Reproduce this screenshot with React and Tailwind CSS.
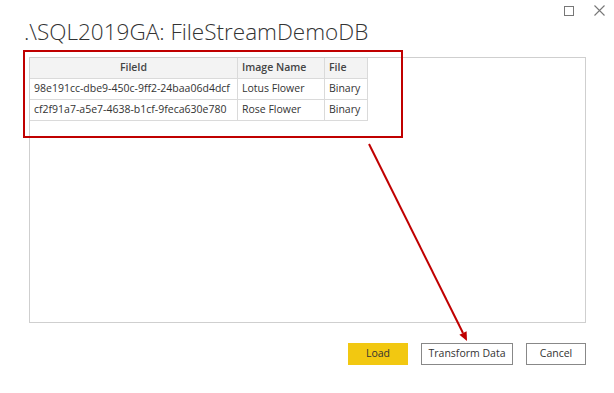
import React from 'react';

const rows = [
  { id: '98e191cc-dbe9-450c-9ff2-24baa06d4dcf', name: 'Lotus Flower', file: 'Binary' },
  { id: 'cf2f91a7-a5e7-4638-b1cf-9feca630e780', name: 'Rose Flower', file: 'Binary' },
];

const App = () => {
  return (
    <div className="relative w-[614px] h-[393px] bg-white overflow-hidden text-[#333] font-['Open_Sans',sans-serif]">
      {/* window controls */}
      <div className="absolute top-[5px] right-[9px] flex items-center gap-[20px]">
        <div className="w-[10px] h-[10px] border border-[#777]"></div>
        <svg className="w-[11px] h-[11px]" viewBox="0 0 11 11">
          <path d="M0.5 0.5L10.5 10.5M10.5 0.5L0.5 10.5" stroke="#777" strokeWidth="1.1" />
        </svg>
      </div>

      {/* Title */}
      <div className="h-[57px] pl-[24px] pt-[18px]">
        <h1 className="text-[22.5px] leading-[28px] font-light text-[#333]">.\SQL2019GA: FileStreamDemoDB</h1>
      </div>

      {/* Preview panel */}
      <div className="ml-[29px] w-[557px] h-[266px] border border-[#cfcfcf]">
        <div className="flex text-[10.5px] font-semibold text-[#444] bg-white">
          <div className="w-[208px] h-[21px] border-r border-b border-[#dadada] bg-[#f3f3f3] flex items-center justify-center">FileId</div>
          <div className="w-[87px] h-[21px] border-r border-b border-[#dadada] bg-[#f3f3f3] flex items-center pl-[4px]">Image Name</div>
          <div className="w-[43px] h-[21px] border-r border-b border-[#dadada] bg-[#f3f3f3] flex items-center pl-[4px]">File</div>
        </div>
        {rows.map((r) => (
          <div key={r.id} className="flex text-[10.5px] text-[#333]">
            <div className="w-[208px] h-[21px] border-r border-b border-[#dadada] flex items-center pl-[4px] whitespace-nowrap">{r.id}</div>
            <div className="w-[87px] h-[21px] border-r border-b border-[#dadada] flex items-center pl-[4px]">{r.name}</div>
            <div className="w-[43px] h-[21px] border-r border-b border-[#dadada] flex items-center pl-[4px]">{r.file}</div>
          </div>
        ))}
      </div>

      {/* Buttons */}
      <div className="flex justify-end gap-[13px] mt-[20px] pr-[28px] text-[10.5px]">
        <button className="w-[60px] h-[22px] bg-[#f2c811] text-[#333]">Load</button>
        <button className="w-[92px] h-[22px] border border-[#888] text-[#333]">Transform Data</button>
        <button className="w-[60px] h-[22px] border border-[#888] text-[#333]">Cancel</button>
      </div>

      {/* annotation: red box and arrow */}
      <div className="absolute left-[23px] top-[50px] w-[380px] h-[88px] border-2 border-[#c00000]"></div>
      <svg className="absolute left-0 top-0 w-[614px] h-[393px] pointer-events-none" viewBox="0 0 614 393">
        <line x1="369" y1="144" x2="463" y2="333" stroke="#c00000" strokeWidth="2" />
        <polygon points="467,341 459.4,334.8 466.6,331.2" fill="#c00000" />
      </svg>
    </div>
  );
};

export default App;
